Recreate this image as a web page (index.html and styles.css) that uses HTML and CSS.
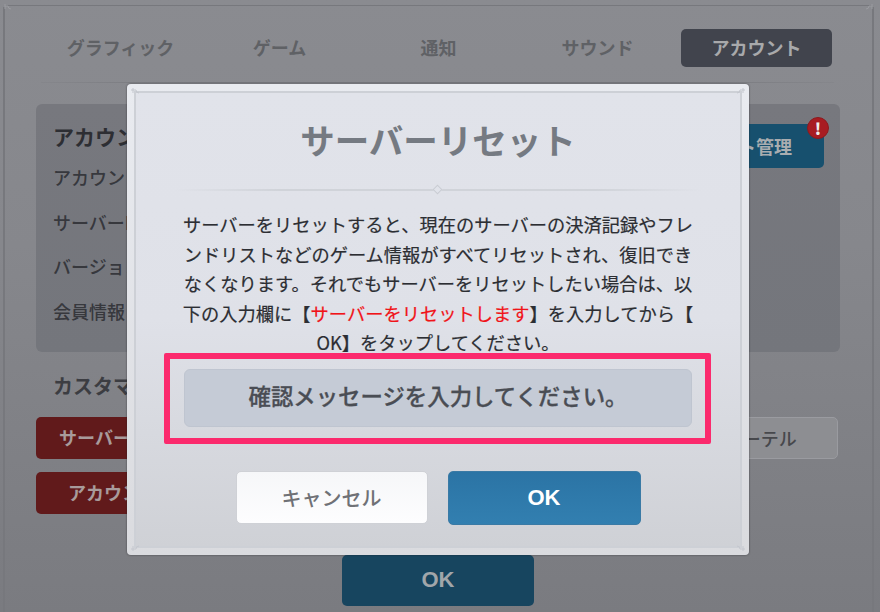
FILE: index.html
```html
<!DOCTYPE html>
<html lang="ja">
<head>
<meta charset="utf-8">
<title>サーバーリセット</title>
<link rel="stylesheet" href="styles.css">
</head>
<body>
<div class="screen">
  <div class="frame">
    <svg class="corner tl" viewBox="0 0 12 12"><path d="M0 2h5M2 0v5M5 2q0 3 3 3" /></svg>
    <svg class="corner tr" viewBox="0 0 12 12"><path d="M12 2H7M10 0v5M7 2q0 3-3 3" /></svg>
    <nav class="tabs">
      <span class="tab">グラフィック</span>
      <span class="tab">ゲーム</span>
      <span class="tab">通知</span>
      <span class="tab">サウンド</span>
      <span class="tab active">アカウント</span>
    </nav>
    <div class="rule"></div>
    <section class="panel">
      <div class="panel-info">
        <h2>アカウント情報</h2>
        <p>アカウントID</p>
        <p>サーバーID</p>
        <p>バージョン</p>
        <p>会員情報</p>
      </div>
      <div class="manage">アカウント管理<span class="badge">!</span></div>
    </section>
    <h3 class="custom">カスタマーサービス</h3>
    <div class="actions">
      <div class="action-col">
        <span class="btn red">サーバーリセット</span>
        <span class="btn red">アカウント削除</span>
      </div>
      <span class="btn light">ユーザーテル</span>
    </div>
    <div class="bottom"><span class="btn dark-ok">OK</span></div>
  </div>

  <div class="dialog">
    <svg class="corner d-tl" viewBox="0 0 12 12"><path d="M0 2h5M2 0v5M5 2q0 3 3 3" /></svg>
    <svg class="corner d-tr" viewBox="0 0 12 12"><path d="M12 2H7M10 0v5M7 2q0 3-3 3" /></svg>
    <svg class="corner d-bl" viewBox="0 0 12 12"><path d="M0 10h5M2 12V7M5 10q0-3 3-3" /></svg>
    <svg class="corner d-br" viewBox="0 0 12 12"><path d="M12 10H7M10 12V7M7 10q0-3-3-3" /></svg>
    <div class="dialog-inner">
      <h1>サーバーリセット</h1>
      <div class="d-rule"><i></i></div>
      <p class="msg">サーバーをリセットすると、現在のサーバーの決済記録やフレ<br>ンドリストなどのゲーム情報がすべてリセットされ、復旧でき<br>なくなります。それでもサーバーをリセットしたい場合は、以<br>下の入力欄に【<em>サーバーをリセットします</em>】を入力してから【<br>OK】をタップしてください。</p>
      <div class="input">確認メッセージを入力してください。</div>
      <div class="d-buttons">
        <span class="d-btn cancel">キャンセル</span>
        <span class="d-btn ok">OK</span>
      </div>
    </div>
  </div>
  <div class="highlight"></div>
</div>
</body>
</html>
```
FILE: styles.css
```css
* { box-sizing: border-box; }
html, body { margin: 0; padding: 0; }
body { width: 880px; height: 612px; overflow: hidden; font-family: "Noto Sans CJK JP", "Noto Sans", sans-serif; }
h1, h2, h3, p { margin: 0; }

.screen { position: relative; width: 880px; height: 612px; overflow: hidden; padding: 5px 6px 0 3px; background: linear-gradient(180deg, #8a8b90 0%, #86878c 40%, #7a7b80 100%); }
.frame { position: relative; height: 607px; border: 2px solid #77787d; border-bottom: 0; border-top-width: 1px; padding: 23px 33px 0 31px; }
.corner { position: absolute; width: 12px; height: 12px; fill: none; stroke: #9a9ba0; stroke-width: 1; }
.tl { left: -2px; top: -2px; }
.tr { right: -2px; top: -2px; }

.tabs { display: grid; grid-template-columns: repeat(5, 151px); column-gap: 8px; margin-left: 9px; }
.tab { height: 38px; line-height: 36px; text-align: center; font-size: 18px; font-weight: 700; color: #5f6165; border-radius: 5px; }
.tab.active { background: #41444d; color: #a8a9ab; }
.rule { height: 1px; margin: 15px 0 0 5px; width: 793px; background: linear-gradient(90deg, #85868b, #77787d 20%, #77787d 80%, #85868b); }

.panel { display: flex; justify-content: space-between; height: 248px; width: 804px; margin-top: 21px; padding: 19px 16px 0 17px; background: linear-gradient(180deg, #77787e, #74767c); border-radius: 6px; }
.panel h2 { font-size: 21px; line-height: 26px; font-weight: 700; color: #2d2e33; }
.panel p { font-size: 18px; line-height: 24px; font-weight: 500; color: #37383d; margin-top: 20.5px; }
.panel h2 + p { margin-top: 16px; }
.manage { position: relative; width: 190px; height: 44px; line-height: 44px; margin-top: 1px; text-align: center; font-size: 18px; font-weight: 700; color: #a9adb0; background: #17506e; border-radius: 5px; }
.badge { position: absolute; right: -5px; top: -7px; width: 22px; height: 22px; line-height: 21px; border-radius: 50%; background: #a81c22; border: 1px solid #8d1a1e; color: #eee; font-size: 16px; font-weight: 900; text-align: center; }

.custom { font-size: 20px; line-height: 26px; font-weight: 700; color: #3c3d42; margin: 21px 0 0 17px; }
.actions { display: flex; justify-content: space-between; width: 802px; margin-top: 18px; }
.action-col { display: flex; flex-direction: column; gap: 13px; }
.btn { display: block; height: 42px; line-height: 41px; text-align: center; font-size: 18px; font-weight: 700; border-radius: 5px; }
.btn.red { width: 190px; background: #611a1b; color: #a89b9b; }
.btn.light { width: 190px; background: #8d8e92; color: #47484c; border: 1px solid #9a9ba0; font-weight: 500; }
.bottom { display: flex; margin: 41px 0 0 306px; }
.btn.dark-ok { width: 192px; height: 51px; line-height: 50px; background: #17455f; color: #a1a6aa; font-family: "Liberation Sans", sans-serif; font-size: 22px; }

.dialog { position: absolute; left: 127px; top: 84px; width: 622px; height: 471px; padding: 7px; background: linear-gradient(180deg, #e9ebf0, #dadbdf); border-radius: 4px; box-shadow: 0 0 2px rgba(30,30,35,.7); }
.dialog-inner { height: 100%; display: flex; flex-direction: column; align-items: center; border: 2px solid #cdd0d6; background: linear-gradient(180deg, #e1e3ea 0%, #dfe1e8 50%, #cfd1d6 100%); padding-top: 21px; }
.dialog h1 { font-size: 34.5px; line-height: 50px; font-weight: 700; color: #757a82; }
.d-rule { position: relative; flex: none; width: 528px; height: 2px; margin-top: 25px; background: linear-gradient(90deg, rgba(200,203,210,0), #d0d3d9 20%, #d0d3d9 80%, rgba(200,203,210,0)); }
.d-rule i { position: absolute; left: 260px; top: -3px; width: 7px; height: 7px; transform: rotate(45deg); background: #e1e3ea; border: 1px solid #c9ccd3; }
.msg { flex: none; width: 530px; margin-top: 19px; font-size: 18.25px; line-height: 29.5px; font-weight: 400; color: #2c2e33; text-align: center; text-spacing-trim: space-all; -webkit-text-stroke: .2px #2c2e33; }
.msg em { font-style: normal; color: #f01419; -webkit-text-stroke-color: #f01419; }
.input { flex: none; width: 508px; height: 58px; margin-top: 11px; line-height: 51px; text-align: center; font-size: 22.4px; font-weight: 500; color: #4a4d54; -webkit-text-stroke: .3px #4a4d54; background: #c5cbd6; border: 1px solid #bfc5d0; border-radius: 6px; }
.d-buttons { display: flex; gap: 20px; margin-top: 44px; }
.d-btn { width: 192px; height: 53px; line-height: 52px; text-align: center; font-size: 20px; font-weight: 500; border-radius: 5px; }
.cancel { background: linear-gradient(180deg, #f6f7f9, #fdfdfe); color: #6f7176; border: 1px solid #cfd1d6; }
.ok { width: 193px; height: 54px; background: linear-gradient(180deg, #2b74a5, #327fb0); color: #fff; border: 1px solid #3a7aa5; font-family: "Liberation Sans", sans-serif; font-size: 22px; font-weight: 700; }

.d-tl { left: 4px; top: 4px; }
.d-tr { right: 4px; top: 4px; }
.d-bl { left: 4px; bottom: 4px; }
.d-br { right: 4px; bottom: 4px; }
.dialog .corner { stroke: #c4c7ce; stroke-width: 1; z-index: 1; }

.highlight { position: absolute; left: 164px; top: 353px; width: 547px; height: 91px; border: 6px solid #fb2a6d; border-radius: 2px; }
```
